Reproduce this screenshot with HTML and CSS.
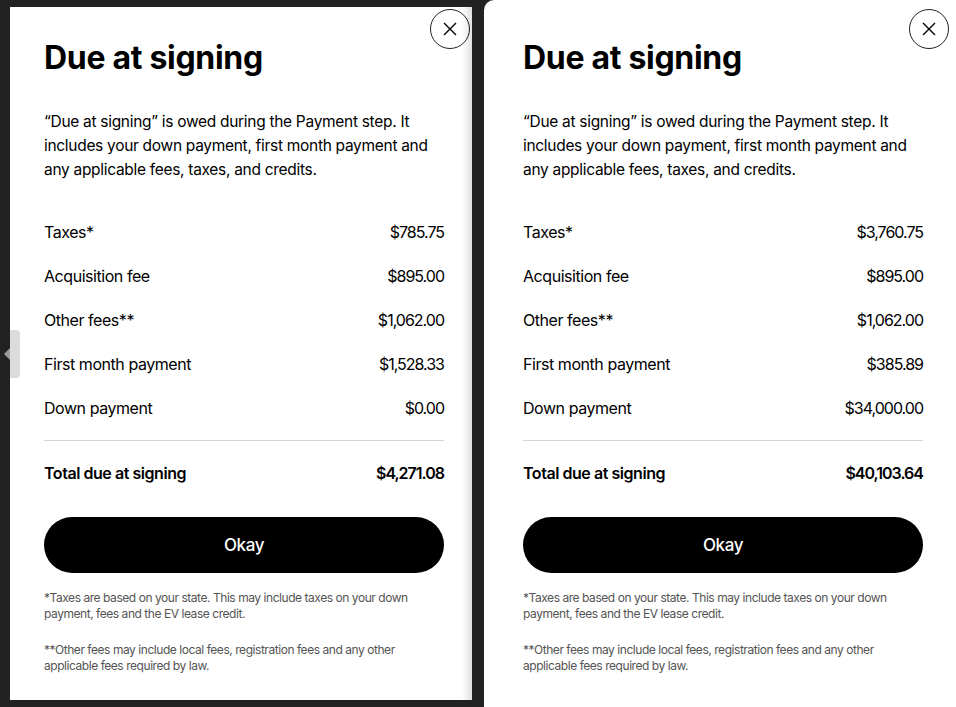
FILE: index.html
```html
<!DOCTYPE html>
<html>
<head>
  <meta charset="UTF-8">
  <title>Due at signing</title>
  <link rel="stylesheet" href="styles.css">
</head>
<body>
  <div class="panel panel-left">
    <div class="sheet">
      <button class="close-btn" aria-label="Close">
        <svg viewBox="0 0 16 16" width="16" height="16"><path d="M2 2 L14 14 M14 2 L2 14" /></svg>
      </button>
      <h1>Due at signing</h1>
      <p class="intro">“Due at signing” is owed during the Payment step. It includes your down payment, first month payment and any applicable fees, taxes, and credits.</p>

      <div class="rows">
        <div class="row"><span>Taxes*</span><span class="amount">$785.75</span></div>
        <div class="row"><span>Acquisition fee</span><span class="amount">$895.00</span></div>
        <div class="row"><span>Other fees**</span><span class="amount">$1,062.00</span></div>
        <div class="row"><span>First month payment</span><span class="amount">$1,528.33</span></div>
        <div class="row"><span>Down payment</span><span class="amount">$0.00</span></div>
      </div>
      <div class="row total"><span>Total due at signing</span><span class="amount">$4,271.08</span></div>

      <button class="okay-btn">Okay</button>

      <p class="note">*Taxes are based on your state. This may include taxes on your down payment, fees and the EV lease credit.</p>
      <p class="note">**Other fees may include local fees, registration fees and any other applicable fees required by law.</p>
    </div>
    <div class="side-tab"></div>
  </div>

  <div class="panel panel-right">
    <div class="sheet">
      <button class="close-btn" aria-label="Close">
        <svg viewBox="0 0 16 16" width="16" height="16"><path d="M2 2 L14 14 M14 2 L2 14" /></svg>
      </button>
      <h1>Due at signing</h1>
      <p class="intro">“Due at signing” is owed during the Payment step. It includes your down payment, first month payment and any applicable fees, taxes, and credits.</p>

      <div class="rows">
        <div class="row"><span>Taxes*</span><span class="amount">$3,760.75</span></div>
        <div class="row"><span>Acquisition fee</span><span class="amount">$895.00</span></div>
        <div class="row"><span>Other fees**</span><span class="amount">$1,062.00</span></div>
        <div class="row"><span>First month payment</span><span class="amount">$385.89</span></div>
        <div class="row"><span>Down payment</span><span class="amount">$34,000.00</span></div>
      </div>
      <div class="row total"><span>Total due at signing</span><span class="amount">$40,103.64</span></div>

      <button class="okay-btn">Okay</button>

      <p class="note">*Taxes are based on your state. This may include taxes on your down payment, fees and the EV lease credit.</p>
      <p class="note">**Other fees may include local fees, registration fees and any other applicable fees required by law.</p>
    </div>
  </div>
</body>
</html>
```

FILE: styles.css
```css
* {
  margin: 0;
  padding: 0;
  box-sizing: border-box;
}

body {
  font-family: Inter, 'Liberation Sans', sans-serif;
  background-color: #222;
  color: #000;
  height: 707px;
  overflow: hidden;
  display: flex;
  gap: 12px;
}

.panel {
  background-color: #fff;
  position: relative;
}

.panel-left {
  width: 462px;
  margin: 7px 0 7px 10px;
  padding: 31px 0 0 34px;
}

/* soft shadow on the clipped right edge */
.panel-left::after {
  content: "";
  position: absolute;
  top: 0;
  right: 0;
  bottom: 0;
  width: 10px;
  background: linear-gradient(to right, rgba(0, 0, 0, 0), rgba(0, 0, 0, 0.12));
}

.panel-right {
  flex: 1;
  height: 720px;
  border-radius: 10px 0 0 10px;
  padding: 38px 0 0 39px;
}

.sheet {
  width: 400px;
  position: relative;
}

.close-btn {
  position: absolute;
  top: -29px;
  right: -26px;
  width: 40px;
  height: 40px;
  border-radius: 50%;
  border: 1px solid #222;
  background: #fff;
  display: flex;
  align-items: center;
  justify-content: center;
  cursor: pointer;
}

.close-btn svg {
  stroke: #000;
  stroke-width: 1.4;
  fill: none;
}

h1 {
  font-size: 32px;
  line-height: 40px;
  font-weight: 700;
  letter-spacing: -0.3px;
}

.intro {
  margin-top: 32px;
  font-size: 15.5px;
  line-height: 24px;
  letter-spacing: -0.3px;
}

.rows {
  margin-top: 28px;
  padding-bottom: 10px;
  border-bottom: 1px solid #d4d4d4;
}

.row {
  display: flex;
  justify-content: space-between;
  padding: 10px 0;
  font-size: 16px;
  line-height: 24px;
  letter-spacing: -0.45px;
}

.row .amount {
  letter-spacing: -1px;
}

.row.total {
  padding-top: 20px;
  font-weight: 600;
}

.okay-btn {
  display: block;
  width: 100%;
  height: 56px;
  margin-top: 22px;
  border: none;
  border-radius: 28px;
  background-color: #000;
  color: #fff;
  font-family: inherit;
  font-size: 17px;
  font-weight: 500;
  letter-spacing: -0.4px;
  cursor: pointer;
}

.note {
  margin-top: 17px;
  font-size: 12px;
  line-height: 16px;
  color: #545454;
  letter-spacing: -0.45px;
}

.note + .note {
  margin-top: 20px;
}

.side-tab {
  position: absolute;
  left: 0;
  top: 323px;
  width: 10px;
  height: 48px;
  background-color: #dcdcdc;
  border-radius: 0 4px 4px 0;
}

.side-tab::before {
  content: "";
  position: absolute;
  left: -6px;
  top: 18px;
  border-top: 6px solid transparent;
  border-bottom: 6px solid transparent;
  border-right: 6px solid #9a9a9a;
}
```
